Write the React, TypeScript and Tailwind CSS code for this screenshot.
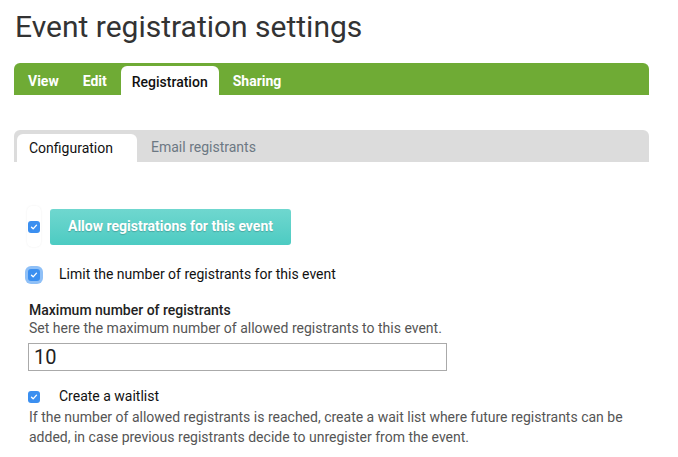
const font = { fontFamily: "Roboto, 'Liberation Sans', sans-serif" };

function Check({ glow = false }: { glow?: boolean }) {
  return (
    <span
      className={
        "flex h-3 w-3 items-center justify-center rounded-[3px] bg-[#3b8ff0] " +
        (glow ? "ring-[3px] ring-[#8fc0f7]" : "")
      }
    >
      <svg viewBox="0 0 12 12" className="h-2.5 w-2.5">
        <path d="M3 6.2l2 2 4-4.4" fill="none" stroke="white" strokeWidth="1.6" strokeLinecap="round" strokeLinejoin="round" />
      </svg>
    </span>
  );
}

export default function App() {
  return (
    <div className="h-[457px] w-[678px] overflow-hidden bg-white text-[#222]" style={font}>
      <h1 className="pl-[15px] pt-[9px] text-[30px] leading-[36px] text-[#333]">
        Event registration settings
      </h1>

      <nav className="ml-[14px] mt-[18px] flex h-8 w-[635px] items-end rounded-t-[6px] bg-[#6fab35] pl-[14px] text-[14px] font-bold text-white">
        <span className="mb-[3px] mr-6">View</span>
        <span className="mb-[3px] mr-[14px]">Edit</span>
        <span className="mr-[14px] flex h-[29px] items-center rounded-t-[6px] bg-white px-[11px] pt-[3px] font-medium text-[#111]">
          Registration
        </span>
        <span className="mb-[3px]">Sharing</span>
      </nav>

      <div className="ml-[14px] mt-[35px] flex h-8 w-[635px] items-end rounded-t-[6px] bg-[#dcdcdc] pl-[3px] text-[14px]">
        <span className="flex h-[28px] w-[120px] items-center rounded-t-[6px] bg-white pl-3 text-[#111]">
          Configuration
        </span>
        <span className="mb-[4px] ml-[14px] text-[#6c7883]">Email registrants</span>
      </div>

      <div className="mt-[44px] flex items-center pl-[27px]">
        <span className="flex h-[41px] w-[14px] items-center justify-center rounded-[5px] bg-white shadow-[0_0_2px_rgba(0,0,0,0.08)]">
          <Check />
        </span>
        <button className="ml-[9px] h-[36px] w-[241px] rounded-[3px] bg-gradient-to-b from-[#6fd7cf] to-[#4ccbc2] text-[14px] font-bold text-white [text-shadow:0_1px_1px_rgba(0,0,0,0.2)]">
          Allow registrations for this event
        </button>
      </div>

      <div className="mt-[17px] flex items-center pl-[28px] text-[14px]">
        <Check glow />
        <span className="ml-[19px] text-[#111]">Limit the number of registrants for this event</span>
      </div>

      <div className="mt-[16px] pl-[29px] text-[14px] leading-[18px]">
        <div className="font-medium text-[#222]">Maximum number of registrants</div>
        <div className="text-[#555]">Set here the maximum number of allowed registrants to this event.</div>
        <div className="mt-[6px] -ml-px flex h-[28px] w-[419px] items-center border border-[#aaa] px-[5px] text-[20px] text-[#222]">
          10
        </div>
      </div>

      <div className="mt-[15px] flex items-center pl-[28px] text-[14px]">
        <Check />
        <span className="ml-[19px] text-[#111]">Create a waitlist</span>
      </div>
      <p className="pl-[29px] pr-10 text-[14px] leading-[20px] text-[#555]">
        If the number of allowed registrants is reached, create a wait list where future registrants can be added, in case previous registrants decide to unregister from the event.
      </p>
    </div>
  );
}
